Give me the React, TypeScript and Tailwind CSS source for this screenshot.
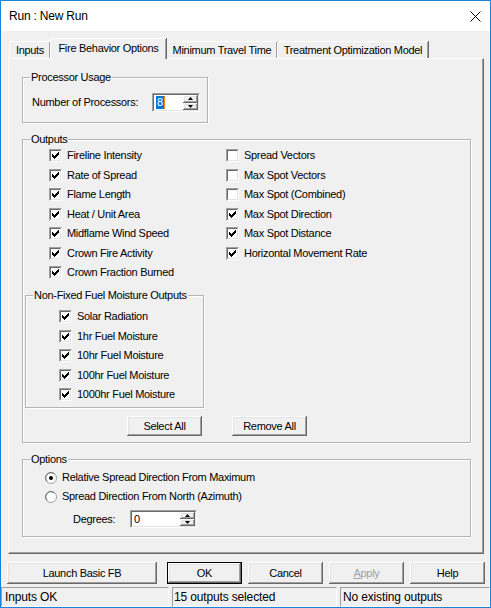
import type { ReactNode } from "react";

const CHECK_ROWS = [2, 3, 4, 3, 2, 1, 0];

const raised =
  "bg-[#f0f0f0] shadow-[inset_-1px_-1px_0_#696969,inset_1px_1px_0_#fff,inset_-2px_-2px_0_#a0a0a0,inset_2px_2px_0_#e3e3e3]";

const sunken =
  "border border-t-[#a0a0a0] border-l-[#a0a0a0] border-r-white border-b-white";

const Check = ({ checked }: { checked: boolean }) => (
  <span className={`flex w-[13px] h-[13px] shrink-0 ${sunken}`}>
    <span className="flex-1 border border-t-[#696969] border-l-[#696969] border-r-[#e3e3e3] border-b-[#e3e3e3] bg-white">
      {checked && (
        <svg width="9" height="9" className="block">
          {CHECK_ROWS.map((y, x) => (
            <rect key={x} x={x + 1} y={y + 1} width="1" height="3" fill="#000" />
          ))}
        </svg>
      )}
    </span>
  </span>
);

const CheckRow = ({ label, checked = true }: { label: string; checked?: boolean }) => (
  <div className="flex items-center h-[19.5px] gap-[5px]">
    <Check checked={checked} />
    <span>{label}</span>
  </div>
);

const Radio = ({ label, checked }: { label: string; checked: boolean }) => (
  <div className="flex items-center h-[19px] gap-[5px]">
    <svg width="12" height="12" className="block shrink-0">
      <circle cx="6" cy="6" r="5.5" fill="#fff" stroke="#a0a0a0" />
      <path d="M2.2 9.4 A4.6 4.6 0 0 1 9.4 2.2" fill="none" stroke="#696969" />
      {checked && <circle cx="6" cy="6" r="2" fill="#000" />}
    </svg>
    <span>{label}</span>
  </div>
);

const Group = ({
  title,
  className,
  children,
}: {
  title: string;
  className: string;
  children: ReactNode;
}) => (
  <div className={`border border-[#b4b4b4] shadow-[inset_1px_1px_0_#fff,1px_1px_0_#fff] ${className}`}>
    <div className="-mt-[7px] ml-[7px] w-fit px-[1px] bg-[#f0f0f0] leading-[13px]">{title}</div>
    {children}
  </div>
);

const Spin = ({ value, className, selected }: { value: string; className: string; selected?: boolean }) => (
  <div className={`flex ${className} ${sunken}`}>
    <div className="flex flex-1 border border-t-[#696969] border-l-[#696969] border-r-[#e3e3e3] border-b-[#e3e3e3] bg-white">
      <div className="flex-1 flex items-center pl-[2px]">
        {selected ? (
          <>
            <span className="bg-[#0078d7] text-white leading-[13px] px-[1px]">{value}</span>
            <span className="w-[1px] h-[13px] bg-[#ff8a00]" />
          </>
        ) : (
          <span className="leading-[13px]">{value}</span>
        )}
      </div>
      <div className="flex flex-col w-[15px]">
        <div className={`flex-1 flex items-center justify-center ${raised}`}>
          <svg width="5" height="3" className="block">
            <path d="M2.5 0 L5 3 L0 3 Z" fill="#000" />
          </svg>
        </div>
        <div className={`flex-1 flex items-center justify-center ${raised}`}>
          <svg width="5" height="3" className="block">
            <path d="M0 0 L5 0 L2.5 3 Z" fill="#000" />
          </svg>
        </div>
      </div>
    </div>
  </div>
);

const Button = ({ label, className, isDefault, disabled }: { label: ReactNode; className: string; isDefault?: boolean; disabled?: boolean }) => (
  <div className={`flex ${className} ${isDefault ? "border border-black" : ""}`}>
    <div className={`flex-1 flex items-center justify-center ${raised} ${disabled ? "text-[#a0a0a0]" : ""}`}>
      {label}
    </div>
  </div>
);

const LEFT_OUTPUTS = [
  "Fireline Intensity",
  "Rate of Spread",
  "Flame Length",
  "Heat / Unit Area",
  "Midflame Wind Speed",
  "Crown Fire Activity",
  "Crown Fraction Burned",
];

const RIGHT_OUTPUTS: [string, boolean][] = [
  ["Spread Vectors", false],
  ["Max Spot Vectors", false],
  ["Max Spot (Combined)", false],
  ["Max Spot Direction", true],
  ["Max Spot Distance", true],
  ["Horizontal Movement Rate", true],
];

const MOISTURE = [
  "Solar Radiation",
  "1hr Fuel Moisture",
  "10hr Fuel Moisture",
  "100hr Fuel Moisture",
  "1000hr Fuel Moisture",
];

const tabBase =
  "flex items-center justify-center bg-[#f0f0f0] border-t border-l border-t-white border-l-white rounded-tl-[2px] shadow-[inset_-1px_0_0_#a0a0a0,1px_0_0_#696969]";

export default function App() {
  return (
    <div className="w-[491px] h-[608px] border border-[#1883d7] bg-[#f0f0f0] flex flex-col text-black font-['Liberation_Sans',Arial,sans-serif] text-[11px] tracking-[-0.3px] leading-[13px] overflow-hidden">
      {/* title bar */}
      <div className="h-[30px] bg-white flex items-center justify-between pl-[8px] pr-[9px] shrink-0">
        <span className="text-[12px] tracking-[-0.2px]">Run : New Run</span>
        <svg width="11" height="11" className="block">
          <path d="M0.5 0.5 L10.5 10.5 M10.5 0.5 L0.5 10.5" stroke="#000" strokeWidth="1" />
        </svg>
      </div>

      {/* tabs */}
      <div className="mt-[7px] ml-[8px] flex items-end h-[20px]">
        <div className={`${tabBase} w-[41px] h-[17px]`}>Inputs</div>
        <div className={`${tabBase} w-[116px] h-[21px] -mb-[1px] relative z-10 pb-[2px]`}>Fire Behavior Options</div>
        <div className={`${tabBase} w-[111px] h-[17px]`}>Minimum Travel Time</div>
        <div className={`${tabBase} w-[151px] h-[17px]`}>Treatment Optimization Model</div>
      </div>

      {/* panel */}
      <div className="ml-[7px] w-[476px] h-[496px] border border-t-white border-l-white border-r-[#696969] border-b-[#696969] shadow-[inset_-1px_-1px_0_#a0a0a0] flex flex-col pl-[13px]">
        <Group title="Processor Usage" className="mt-[18px] w-[186px] h-[46px]">
          <div className="flex items-start pt-[9px] pl-[9px]">
            <span className="w-[120px] h-[19px] flex items-center">Number of Processors:</span>
            <Spin value="8" selected className="w-[48px] h-[19px]" />
          </div>
        </Group>

        <Group title="Outputs" className="mt-[16px] w-[449px] h-[304px]">
          <div className="flex">
            <div className="w-[203px] flex flex-col">
              <div className="pl-[26px]">
                {LEFT_OUTPUTS.map((l) => (
                  <CheckRow key={l} label={l} />
                ))}
              </div>
              <Group title="Non-Fixed Fuel Moisture Outputs" className="ml-[2px] mt-[12.5px] w-[179px] h-[113px]">
                <div className="pt-[5px] pl-[33px]">
                  {MOISTURE.map((l) => (
                    <CheckRow key={l} label={l} />
                  ))}
                </div>
              </Group>
            </div>
            <div>
              {RIGHT_OUTPUTS.map(([l, c]) => (
                <CheckRow key={l} label={l} checked={c} />
              ))}
            </div>
          </div>
          <div className="flex mt-[8px] ml-[104px] gap-[30px]">
            <Button label="Select All" className="w-[75px] h-[20px]" />
            <Button label="Remove All" className="w-[75px] h-[20px]" />
          </div>
        </Group>

        <Group title="Options" className="mt-[16px] w-[449px] h-[78px]">
          <div className="pt-[2px] pl-[22px]">
            <Radio label="Relative Spread Direction From Maximum" checked />
            <Radio label="Spread Direction From North (Azimuth)" checked={false} />
          </div>
          <div className="flex items-center mt-[4px] pl-[50px]">
            <span className="w-[57px]">Degrees:</span>
            <Spin value="0" className="w-[67px] h-[18px]" />
          </div>
        </Group>
      </div>

      {/* dialog buttons */}
      <div className="flex mt-[8px] pl-[6px] h-[22px]">
        <Button label="Launch Basic FB" className="w-[150px] h-[22px]" />
        <Button label="OK" isDefault className="ml-[10px] w-[75px] h-[22px]" />
        <Button label="Cancel" className="ml-[6px] w-[75px] h-[22px]" />
        <Button
          label={
            <span>
              <span className="underline">A</span>pply
            </span>
          }
          disabled
          className="ml-[6px] w-[75px] h-[22px]"
        />
        <Button label="Help" className="ml-[6px] w-[75px] h-[22px]" />
      </div>

      {/* status bar */}
      <div className="flex mt-[3px] h-[20px] gap-[3px] text-[12px] tracking-[-0.15px]">
        <div className={`w-[168px] flex items-center pl-[3px] ${sunken}`}>Inputs OK</div>
        <div className={`w-[165px] flex items-center pl-[1px] ${sunken}`}>15 outputs selected</div>
        <div className={`flex-1 flex items-center pl-[2px] ${sunken}`}>No existing outputs</div>
      </div>
    </div>
  );
}
